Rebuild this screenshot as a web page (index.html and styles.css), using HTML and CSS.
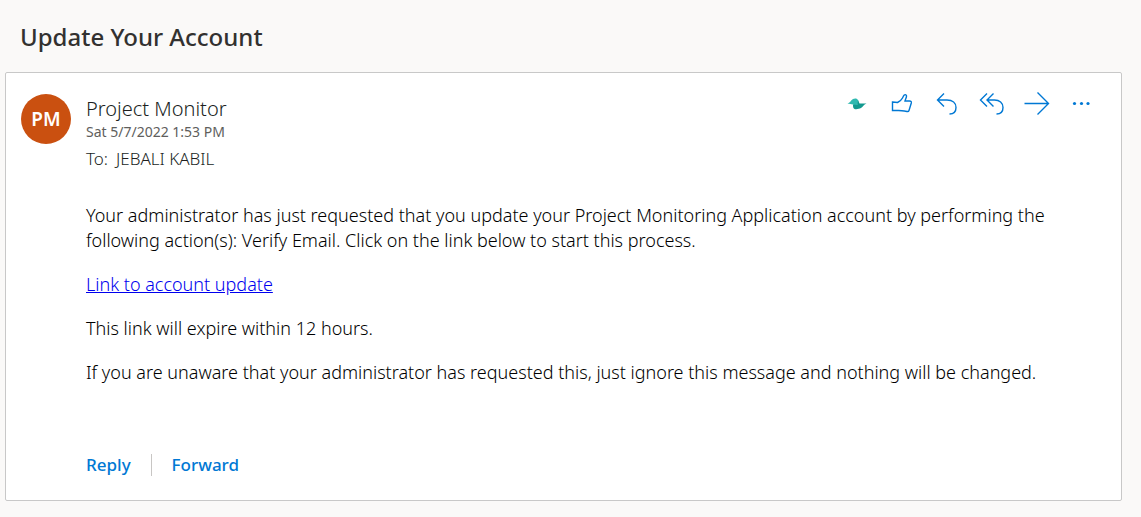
FILE: index.html
```html
<!DOCTYPE html>
<html lang="en">
<head>
<meta charset="utf-8">
<meta name="viewport" content="width=device-width, initial-scale=1">
<title>Update Your Account</title>
<link rel="stylesheet" href="styles.css">
</head>
<body>
<main class="reader">
  <h1 class="subject">Update Your Account</h1>
  <article class="card">
    <div class="avatar">PM</div>
    <div class="content">
      <header class="header">
        <div class="meta">
          <div class="sender">Project Monitor</div>
          <div class="date">Sat 5/7/2022 1:53 PM</div>
          <div class="recipient"><span>To:</span><span>JEBALI KABIL</span></div>
        </div>
        <div class="actions">
          <button class="action" type="button" aria-label="Add-in">
            <svg width="26" height="26" viewBox="0 0 26 26"><path d="M3.500 12.500 C6 12 6.500 9.500 9 8 C11 7 13.500 7.500 14 9 L15 13 L12 15 L9 13.500 Z" fill="#2fb9b0"/><path d="M14 9 L15.500 12.500 L22.500 12.500 C19.500 13.500 19 16 17 17 C15 18 12.500 18.500 10.500 18 C9 17.500 9 15.500 9 13.500 L13.500 14 Z" fill="#12998f"/></svg>
          </button>
          <button class="action" type="button" aria-label="Like">
            <svg width="26" height="26" viewBox="0 0 26 26"><path d="M3.500 11 L8.500 11.500 C10.500 10.500 12.500 9 13.500 7 C14 6 14.500 4.800 15.300 4 C16.200 3.200 17.800 4 17.500 5.300 C17.300 7 16.300 8.500 16 10 H20.500 C22 10 22.600 10.800 22.300 12 L20 19.500 C19.700 20.500 19 20.700 18 20.500 C15 20 12 19.500 9.500 19.500 H3.500 Z"/></svg>
          </button>
          <button class="action" type="button" aria-label="Reply">
            <svg width="26" height="26" viewBox="0 0 26 26"><path d="M10 2.500 L3.500 9 L10 15.500 M3.500 9 H13 C18.500 9 22 12 22 16.500 C22 20.500 19.500 23 15.500 23"/></svg>
          </button>
          <button class="action" type="button" aria-label="Reply all">
            <svg width="26" height="26" viewBox="0 0 26 26"><path d="M8 2.500 L1.500 9 L8 15.500 M14.500 2.500 L8 9 L14.500 15.500 M8 9 H15.500 C20.500 9 24 12 24 16.500 C24 20.500 21.500 23 17.500 23"/></svg>
          </button>
          <button class="action" type="button" aria-label="Forward">
            <svg width="26" height="26" viewBox="0 0 26 26"><path d="M0.500 12.500 H24.500 M13.500 1.500 L24.500 12.500 L13.500 23.500"/></svg>
          </button>
          <button class="action" type="button" aria-label="More actions">
            <svg width="26" height="26" viewBox="0 0 26 26"><g class="dots"><circle cx="5.500" cy="12.500" r="1.600"/><circle cx="12.500" cy="12.500" r="1.600"/><circle cx="19" cy="12.500" r="1.600"/></g></svg>
          </button>
        </div>
      </header>
      <div class="body">
        <p>Your administrator has just requested that you update your Project Monitoring Application account by performing the following action(s): Verify Email. Click on the link below to start this process.</p>
        <p><a href="#update">Link to account update</a></p>
        <p>This link will expire within 12 hours.</p>
        <p>If you are unaware that your administrator has requested this, just ignore this message and nothing will be changed.</p>
      </div>
      <footer class="footer">
        <button class="respond" type="button">Reply</button>
        <button class="respond" type="button">Forward</button>
      </footer>
    </div>
  </article>
</main>
</body>
</html>
```
FILE: styles.css
```css
* { box-sizing: border-box; }

body {
  margin: 0;
  background: #faf9f8;
  color: #201f1e;
  font-family: "Noto Sans", "Open Sans", sans-serif;
}

.reader { padding: 20px 19px 16px 5px; }

.subject {
  margin: 0;
  padding: 0 15px 18px;
  color: #323130;
  font-size: 24px;
  line-height: 34px;
  font-weight: 500;
}

.card {
  display: flex;
  gap: 15px;
  padding: 21px 17px 24px 15px;
  background: #fff;
  border: 1px solid #c8c8c8;
  border-radius: 2px;
}

.avatar {
  flex: none;
  display: grid;
  place-items: center;
  width: 50px;
  height: 50px;
  border-radius: 50%;
  background: #ca5010;
  color: #fff;
  font-size: 19px;
  font-weight: 600;
}

.content { flex: 1; min-width: 0; }

.header {
  display: flex;
  justify-content: space-between;
  align-items: flex-start;
}

.meta { padding-top: 3px; font-weight: 300; }

.sender { font-size: 20px; line-height: 24px; }

.date { color: #605e5c; font-size: 14px; font-weight: 400; line-height: 22px; }

.recipient {
  display: flex;
  gap: 8px;
  padding-top: 3px;
  font-size: 17px;
  line-height: 26px;
}

.actions { display: flex; margin-top: -5px; }

.action {
  display: grid;
  place-items: center;
  width: 45px;
  height: 30px;
  padding: 0;
  border: 0;
  background: none;
}

.action svg { fill: none; stroke: #0078d4; stroke-width: 1.4; }
.action svg [fill] { stroke: none; }
.action svg .dots { fill: #0078d4; stroke: none; }

.body {
  padding: 31px 36px 0 0;
  color: #000;
  font-size: 18px;
  font-weight: 300;
  line-height: 25px;
}

.body p { margin: 0 0 19px; }
.body a { color: #0000ee; }

.footer { display: flex; padding-top: 50px; }

.respond {
  padding: 0 20px;
  border: 0;
  background: none;
  color: #0078d4;
  font: 500 17px/22px "Noto Sans", "Open Sans", sans-serif;
}

.respond:first-child { padding-left: 0; }
.respond + .respond { border-left: 1px solid #c8c6c4; }
```
